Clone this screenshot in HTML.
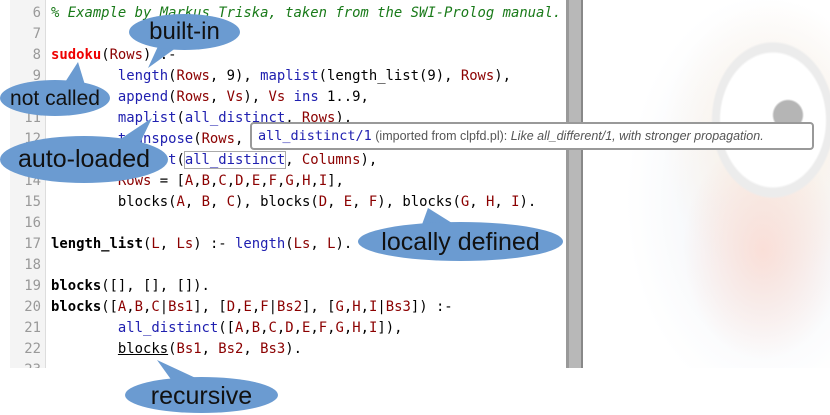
<!DOCTYPE html>
<html><head><style>
body{margin:0;width:830px;height:413px;overflow:hidden;background:#fff;position:relative;font-family:"DejaVu Sans Mono",monospace}
#ed{position:absolute;left:10px;top:0;width:556px;height:368px;background:#fff;overflow:hidden}
#gut{position:absolute;left:0;top:0;width:35px;height:368px;background:#f4f4f4;border-right:1px solid #ddd}
.l{position:absolute;left:0;height:21px;line-height:21px;font-size:13.9px;white-space:pre;color:#000}
.n{display:inline-block;width:31px;text-align:right;color:#999;margin-right:10px}
.c{color:#197a19;font-style:italic}.h{color:#e00;font-weight:bold}.v{color:#8b0000}.b{color:#2020b0}.d{font-weight:bold}
#split{position:absolute;left:566px;top:0;width:17px;height:368px;background:#b8b8b8;border-left:3px solid #999;border-right:2px solid #888;box-sizing:border-box}
#right{position:absolute;left:583px;top:0;width:247px;height:368px;background:
radial-gradient(circle at 205px 115px,#b5b5b5 0 14px,transparent 16px),
radial-gradient(ellipse 55px 70px at 190px 120px,#fff 0 52px,#ececec 54px 60px,transparent 62px),
radial-gradient(ellipse 80px 110px at 180px 250px,#fadfd8,transparent),
radial-gradient(ellipse 110px 140px at 190px 140px,#fcf0e2,transparent),
radial-gradient(ellipse 140px 210px at 180px 200px,#eef1f6,#fff 98%)}
.bub{position:absolute;background:#6b9bd1;border-radius:50%;color:#111;font-family:"Liberation Sans",sans-serif;text-align:center}
#tip{position:absolute;left:250px;top:122px;width:564px;height:28px;border:2px solid #999;border-radius:4px;background:#fff;box-sizing:border-box;font-family:"Liberation Sans",sans-serif;font-size:12.5px;color:#555;line-height:24px;white-space:nowrap;padding-left:6px}
</style></head><body>
<div id="ed"><div id="gut"></div>
<div class="l" style="top:3px"><span class="n">6</span><span class="c">% Example by Markus Triska, taken from the SWI-Prolog manual.</span></div>
<div class="l" style="top:24px"><span class="n">7</span></div>
<div class="l" style="top:45px"><span class="n">8</span><span class="h">sudoku</span>(<span class="v">Rows</span>) :-</div>
<div class="l" style="top:66px"><span class="n">9</span>        <span class="b">length</span>(<span class="v">Rows</span>, 9), <span class="b">maplist</span>(length_list(9), <span class="v">Rows</span>),</div>
<div class="l" style="top:87px"><span class="n">10</span>        <span class="b">append</span>(<span class="v">Rows</span>, <span class="v">Vs</span>), <span class="v">Vs</span> <span class="b">ins</span> 1..9,</div>
<div class="l" style="top:108px"><span class="n">11</span>        <span class="b">maplist</span>(<span class="b">all_distinct</span>, <span class="v">Rows</span>),</div>
<div class="l" style="top:129px"><span class="n">12</span>        <span class="b">transpose</span>(<span class="v">Rows</span>, <span class="v">Columns</span>),</div>
<div class="l" style="top:150px"><span class="n">13</span>        <span class="b">maplist</span>(<span class="b" style="outline:1px solid #aaa">all_distinct</span>, <span class="v">Columns</span>),</div>
<div class="l" style="top:171px"><span class="n">14</span>        <span class="v">Rows</span> = [<span class="v">A</span>,<span class="v">B</span>,<span class="v">C</span>,<span class="v">D</span>,<span class="v">E</span>,<span class="v">F</span>,<span class="v">G</span>,<span class="v">H</span>,<span class="v">I</span>],</div>
<div class="l" style="top:192px"><span class="n">15</span>        blocks(<span class="v">A</span>, <span class="v">B</span>, <span class="v">C</span>), blocks(<span class="v">D</span>, <span class="v">E</span>, <span class="v">F</span>), blocks(<span class="v">G</span>, <span class="v">H</span>, <span class="v">I</span>).</div>
<div class="l" style="top:213px"><span class="n">16</span></div>
<div class="l" style="top:234px"><span class="n">17</span><span class="d">length_list</span>(<span class="v">L</span>, <span class="v">Ls</span>) :- <span class="b">length</span>(<span class="v">Ls</span>, <span class="v">L</span>).</div>
<div class="l" style="top:255px"><span class="n">18</span></div>
<div class="l" style="top:276px"><span class="n">19</span><span class="d">blocks</span>([], [], []).</div>
<div class="l" style="top:297px"><span class="n">20</span><span class="d">blocks</span>([<span class="v">A</span>,<span class="v">B</span>,<span class="v">C</span>|<span class="v">Bs1</span>], [<span class="v">D</span>,<span class="v">E</span>,<span class="v">F</span>|<span class="v">Bs2</span>], [<span class="v">G</span>,<span class="v">H</span>,<span class="v">I</span>|<span class="v">Bs3</span>]) :-</div>
<div class="l" style="top:318px"><span class="n">21</span>        <span class="b">all_distinct</span>([<span class="v">A</span>,<span class="v">B</span>,<span class="v">C</span>,<span class="v">D</span>,<span class="v">E</span>,<span class="v">F</span>,<span class="v">G</span>,<span class="v">H</span>,<span class="v">I</span>]),</div>
<div class="l" style="top:339px"><span class="n">22</span>        <span style="text-decoration:underline">blocks</span>(<span class="v">Bs1</span>, <span class="v">Bs2</span>, <span class="v">Bs3</span>).</div>
<div class="l" style="top:360px"><span class="n">23</span></div>
</div>
<div id="split"></div><div id="right"></div>
<div id="tip"><span style="font-family:'DejaVu Sans Mono',monospace;color:#2020b0;font-size:13.5px">all_distinct/1</span> (imported from clpfd.pl): <i>Like all_different/1, with stronger propagation.</i></div>
<svg style="position:absolute;left:0;top:0" width="830" height="413">
<g fill="#6b9bd1">
<polygon points="160,42 180,45 148,68"/>
<polygon points="60,90 85,85 78,62"/>
<polygon points="110,146 140,143 152,118"/>
<polygon points="420,230 460,228 428,208"/>
<polygon points="175,385 200,380 157,360"/>
</g></svg>
<div class="bub" style="left:129px;top:14px;width:111px;height:36px;font-size:24px;line-height:36px">built-in</div>
<div class="bub" style="left:0;top:80px;width:110px;height:36px;font-size:21px;line-height:38px">not called</div>
<div class="bub" style="left:0;top:136px;width:168px;height:47px;font-size:25px;line-height:47px">auto-loaded</div>
<div class="bub" style="left:358px;top:222px;width:205px;height:39px;font-size:25px;line-height:40px">locally defined</div>
<div class="bub" style="left:125px;top:377px;width:153px;height:36px;font-size:25px;line-height:38px">recursive</div>
</body></html>
